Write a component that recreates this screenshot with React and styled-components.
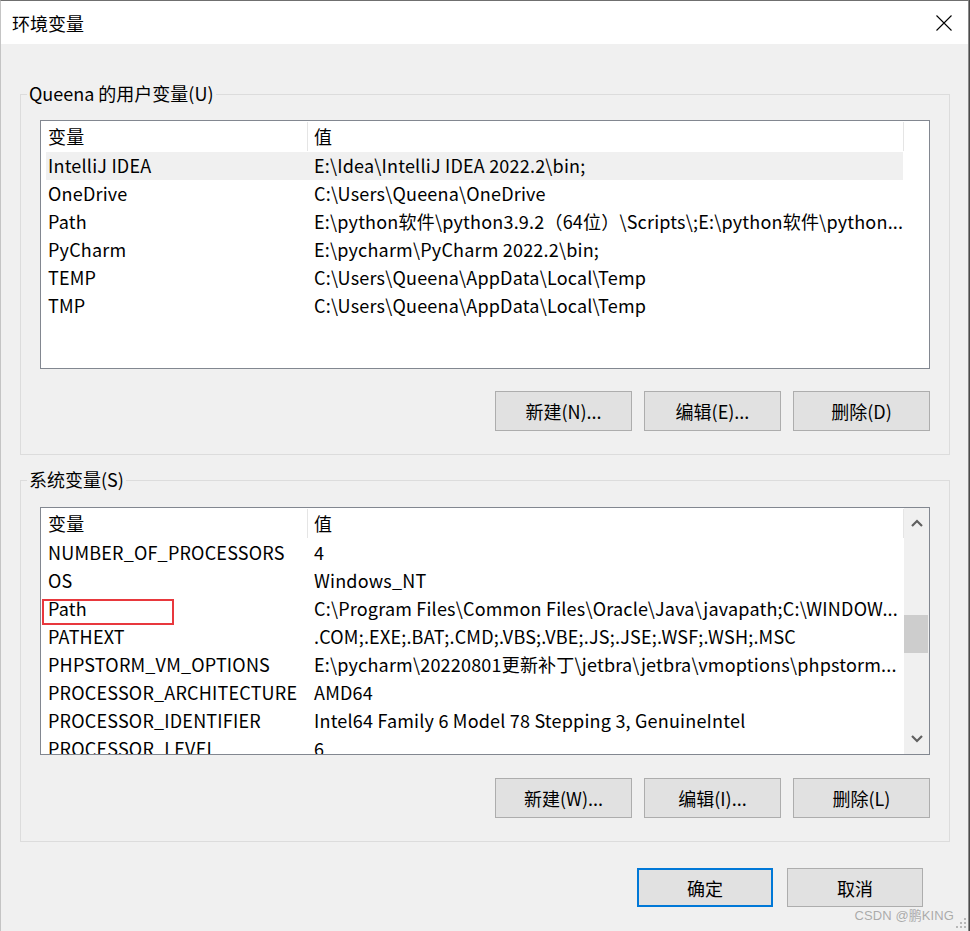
import React from "react";
import styled, { createGlobalStyle } from "styled-components";

const GlobalStyle = createGlobalStyle`
  html, body {
    margin: 0;
    padding: 0;
    background: #4b4b4b;
  }
  body {
    font-family: "Noto Sans CJK SC", "Noto Sans", sans-serif;
    font-size: 18px;
    color: #000;
  }
`;

const Window = styled.div`
  position: relative;
  box-sizing: border-box;
  width: 969px;
  height: 931px;
  background: #f0f0f0;
  border-top: 1px solid #6f6f6f;
  border-right: 1px solid #8a8a8a;
  border-left: 1px solid #c4c4c4;
  display: flex;
  flex-direction: column;
`;

const TitleBar = styled.div`
  height: 43px;
  background: #fff;
  display: flex;
  align-items: center;
  justify-content: space-between;
  padding: 0 16px 0 11px;
  flex-shrink: 0;
`;

const Title = styled.span`
  font-size: 18px;
  line-height: 24px;
`;

const CloseButton = styled.div`
  width: 16px;
  height: 16px;
  display: flex;
  align-items: center;
  justify-content: center;
`;

const Body = styled.div`
  flex: 1;
  display: flex;
  flex-direction: column;
  padding: 0 18px 0 19px;
`;

const Group = styled.fieldset`
  margin: ${(p) => p.$top}px 0 0 0;
  padding: 0;
  border: 1px solid #dcdcdc;
  min-width: 0;
`;

const Legend = styled.legend`
  position: relative;
  top: -1px;
  margin-left: 6px;
  padding: 0 2px;
  font-size: 18px;
  line-height: 24px;
`;

const GroupInner = styled.div`
  padding: ${(p) => p.$top}px 19px 23px 19px;
  display: flex;
  flex-direction: column;
`;

const List = styled.div`
  box-sizing: border-box;
  height: ${(p) => p.$height}px;
  background: #fff;
  border: 1px solid #828790;
  display: flex;
  overflow: hidden;
  letter-spacing: 0.2px;
`;

const ListContent = styled.div`
  width: 863px;
  flex-shrink: 0;
  overflow: hidden;
`;

const HeaderRow = styled.div`
  display: flex;
  height: 31px;
`;

const HeaderCell = styled.div`
  box-sizing: border-box;
  width: ${(p) => p.$width}px;
  height: 29px;
  margin-top: 1px;
  padding-left: ${(p) => p.$pad}px;
  line-height: 28px;
  border-right: 1px solid #e5e5e5;
  white-space: nowrap;
`;

const Row = styled.div`
  position: relative;
  display: flex;
  height: 28px;
  width: 857px;
  margin-left: 5px;
  line-height: 27px;
  background: ${(p) => (p.$selected ? "#f0f0f0" : "transparent")};
`;

const NameCell = styled.div`
  width: 261px;
  padding-left: 2px;
  box-sizing: border-box;
  white-space: nowrap;
  overflow: hidden;
`;

const ValueCell = styled.div`
  flex: 1;
  padding-left: 7px;
  white-space: nowrap;
  overflow: hidden;
`;

const Marker = styled.div`
  position: absolute;
  left: -4px;
  top: 4px;
  width: 132px;
  height: 26px;
  box-sizing: border-box;
  border: 2px solid #e8383d;
  pointer-events: none;
`;

const ScrollBar = styled.div`
  width: 26px;
  background: #f0f0f0;
  display: flex;
  flex-direction: column;
`;

const ScrollArrow = styled.div`
  height: 31px;
  display: flex;
  align-items: center;
  justify-content: center;
  flex-shrink: 0;
`;

const ScrollTrack = styled.div`
  flex: 1;
`;

const Thumb = styled.div`
  width: 24px;
  height: 38px;
  background: #cdcdcd;
`;

const ButtonRow = styled.div`
  display: flex;
  justify-content: flex-end;
  gap: ${(p) => p.$gap}px;
  margin-top: ${(p) => p.$top}px;
  padding-right: ${(p) => p.$right || 0}px;
`;

const Button = styled.button`
  box-sizing: border-box;
  width: ${(p) => p.$width || 137}px;
  height: ${(p) => p.$height || 40}px;
  background: #e1e1e1;
  border: ${(p) => (p.$default ? "2px solid #0078d7" : "1px solid #adadad")};
  font-family: inherit;
  font-size: 18px;
  color: #000;
  padding: 0;
  cursor: default;
`;

const Watermark = styled.div`
  position: absolute;
  right: 14px;
  bottom: 7px;
  font-family: "Liberation Sans", "Noto Sans CJK SC", sans-serif;
  font-size: 13px;
  color: rgba(110, 110, 110, 0.55);
  letter-spacing: 0.1px;
`;

const Grip = styled.svg`
  position: absolute;
  right: 2px;
  bottom: 3px;
`;

const userVars = [
  ["IntelliJ IDEA", "E:\\Idea\\IntelliJ IDEA 2022.2\\bin;"],
  ["OneDrive", "C:\\Users\\Queena\\OneDrive"],
  ["Path", "E:\\python软件\\python3.9.2（64位）\\Scripts\\;E:\\python软件\\python..."],
  ["PyCharm", "E:\\pycharm\\PyCharm 2022.2\\bin;"],
  ["TEMP", "C:\\Users\\Queena\\AppData\\Local\\Temp"],
  ["TMP", "C:\\Users\\Queena\\AppData\\Local\\Temp"],
];

const systemVars = [
  ["NUMBER_OF_PROCESSORS", "4"],
  ["OS", "Windows_NT"],
  ["Path", "C:\\Program Files\\Common Files\\Oracle\\Java\\javapath;C:\\WINDOW..."],
  ["PATHEXT", ".COM;.EXE;.BAT;.CMD;.VBS;.VBE;.JS;.JSE;.WSF;.WSH;.MSC"],
  ["PHPSTORM_VM_OPTIONS", "E:\\pycharm\\20220801更新补丁\\jetbra\\jetbra\\vmoptions\\phpstorm..."],
  ["PROCESSOR_ARCHITECTURE", "AMD64"],
  ["PROCESSOR_IDENTIFIER", "Intel64 Family 6 Model 78 Stepping 3, GenuineIntel"],
  ["PROCESSOR_LEVEL", "6"],
];

const Chevron = ({ down }) => (
  <svg width="12" height="9" viewBox="0 0 12 9">
    <path
      d={down ? "M1 2 L6 7 L11 2" : "M1 7 L6 2 L11 7"}
      fill="none"
      stroke="#606060"
      strokeWidth="2.2"
    />
  </svg>
);

const VarList = ({ rows, height, selected, marked, scroll }) => (
  <List $height={height}>
    <ListContent>
      <HeaderRow>
        <HeaderCell $width={267} $pad={7}>变量</HeaderCell>
        <HeaderCell $width={596} $pad={6}>值</HeaderCell>
      </HeaderRow>
      {rows.map(([name, value], i) => (
        <Row key={name + i} $selected={i === selected}>
          <NameCell>{name}</NameCell>
          <ValueCell>{value}</ValueCell>
          {i === marked && <Marker />}
        </Row>
      ))}
    </ListContent>
    {scroll && (
      <ScrollBar>
        <ScrollArrow>
          <Chevron />
        </ScrollArrow>
        <ScrollTrack>
          <Thumb style={{ marginTop: 76 }} />
        </ScrollTrack>
        <ScrollArrow>
          <Chevron down />
        </ScrollArrow>
      </ScrollBar>
    )}
  </List>
);

const App = () => {
  return (
    <>
      <GlobalStyle />
      <Window>
        <TitleBar>
          <Title>环境变量</Title>
          <CloseButton>
            <svg width="16" height="16" viewBox="0 0 16 16">
              <path d="M0.5 0.5 L15.5 15.5 M15.5 0.5 L0.5 15.5" stroke="#000" strokeWidth="1.1" />
            </svg>
          </CloseButton>
        </TitleBar>
        <Body>
          <Group $top={38}>
            <Legend>Queena 的用户变量(U)</Legend>
            <GroupInner $top={14}>
              <VarList rows={userVars} height={249} selected={0} />
              <ButtonRow $gap={12} $top={22}>
                <Button>新建(N)...</Button>
                <Button>编辑(E)...</Button>
                <Button>删除(D)</Button>
              </ButtonRow>
            </GroupInner>
          </Group>
          <Group $top={13}>
            <Legend>系统变量(S)</Legend>
            <GroupInner $top={15}>
              <VarList rows={systemVars} height={248} marked={2} scroll />
              <ButtonRow $gap={12} $top={23}>
                <Button>新建(W)...</Button>
                <Button>编辑(I)...</Button>
                <Button>删除(L)</Button>
              </ButtonRow>
            </GroupInner>
          </Group>
          <ButtonRow $gap={14} $top={26} $right={27}>
            <Button $default $width={136} $height={39}>确定</Button>
            <Button $width={136} $height={39}>取消</Button>
          </ButtonRow>
        </Body>
        <Watermark>CSDN @鹏KING</Watermark>
        <Grip width="10" height="10" viewBox="0 0 10 10">
          <g fill="#b8b8b8">
            <rect x="8" y="0" width="2" height="2" />
            <rect x="4" y="4" width="2" height="2" />
            <rect x="8" y="4" width="2" height="2" />
            <rect x="0" y="8" width="2" height="2" />
            <rect x="4" y="8" width="2" height="2" />
            <rect x="8" y="8" width="2" height="2" />
          </g>
        </Grip>
      </Window>
    </>
  );
};

export default App;
